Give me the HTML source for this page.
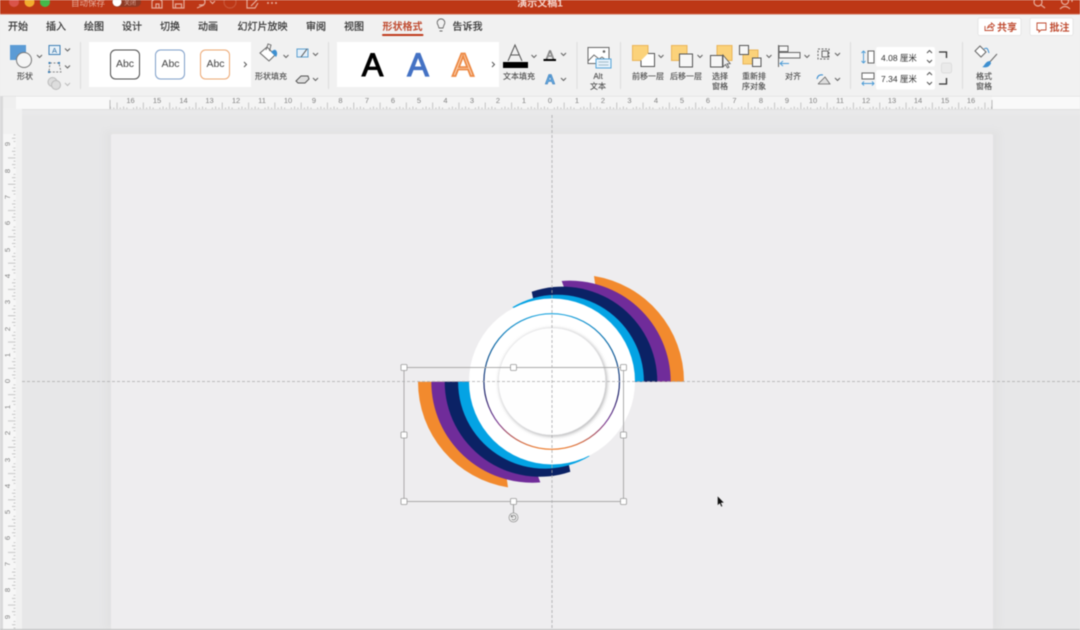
<!DOCTYPE html>
<html><head><meta charset="utf-8"><style>
html,body{margin:0;padding:0;width:1080px;height:630px;overflow:hidden;background:#e9e9ea}
svg{display:block;position:absolute;left:0;top:0;filter:blur(.4px)}
text{font-family:"Liberation Sans","Noto Sans CJK SC",sans-serif;fill:#3c3c3c}
.t{font-size:10px;text-anchor:middle;fill:#333;stroke:#333;stroke-width:.2}
.s{font-size:8px;text-anchor:middle;fill:#4a4a4a;stroke:#4a4a4a;stroke-width:.12}
.r{font-size:7.5px;text-anchor:middle;fill:#808080}
.c{fill:none;stroke:#666;stroke-width:1.1}
.i{fill:none;stroke:#666;stroke-width:1}
</style></head><body>
<svg width="1080" height="630" viewBox="0 0 1080 630" xmlns="http://www.w3.org/2000/svg">
<defs>
<linearGradient id="ring" x1="0" y1="0" x2="0" y2="1"><stop offset="0" stop-color="#1da5df"/><stop offset=".35" stop-color="#0f4f8c"/><stop offset=".6" stop-color="#23246b"/><stop offset=".8" stop-color="#7a3a94"/><stop offset="1" stop-color="#ef7d2c"/></linearGradient>
<filter id="b2" x="-20%" y="-20%" width="140%" height="140%"><feGaussianBlur stdDeviation="1.800"/></filter>
<filter id="b3"><feGaussianBlur stdDeviation="3.5"/></filter>
<pattern id="hr" width="26.3" height="12" patternUnits="userSpaceOnUse" x="25" y="97">
<path d="M13.15 12V5.500M6.6 12V9.500M19.7 12V9.500M3.300 12V10.500M9.900 12V10.500M16.400 12V10.500M23 12V10.500" stroke="#b0b0b0" stroke-width=".7" fill="none"/></pattern>
<pattern id="vr" width="16" height="26.3" patternUnits="userSpaceOnUse" x="0" y="13.300">
<path d="M8 13.150H15.500M12 6.6H15.500M12 19.700H15.500M13.500 3.300H15.500M13.500 9.900H15.500M13.500 16.400H15.500M13.500 23H15.500" stroke="#b4b4b4" stroke-width=".7" fill="none"/></pattern>
</defs>

<!-- workspace -->
<rect x="0" y="96" width="1080" height="534" fill="#e9e9ea"/>
<rect x="22" y="115" width="1058" height="515" fill="#e7e7e8"/>
<rect x="104" y="130" width="896" height="500" fill="#e2e2e3" filter="url(#b3)"/>
<rect x="111" y="134" width="882" height="496" rx="2" fill="#eeedef"/>

<!-- rulers -->
<rect x="0" y="96" width="1080" height="13" fill="#f9f9f9"/>
<rect x="0" y="96" width="16" height="13" fill="#efefef"/>
<rect x="110" y="96" width="882" height="13" fill="#f4f4f4"/>
<rect x="110" y="97" width="882" height="12" fill="url(#hr)"/>
<path d="M0 96H1080" stroke="#dadada"/><path d="M0 109.500H1080" stroke="#e0e0e0"/>
<path d="M110 100V109M992 100V109" stroke="#aaa" stroke-width=".8"/>
<g>
<text class="r" x="130.500" y="103">16</text><text class="r" x="157" y="103">15</text><text class="r" x="183.500" y="103">14</text><text class="r" x="209.500" y="103">13</text><text class="r" x="236" y="103">12</text><text class="r" x="262" y="103">11</text><text class="r" x="288" y="103">10</text><text class="r" x="314" y="103">9</text><text class="r" x="340.500" y="103">8</text><text class="r" x="367" y="103">7</text><text class="r" x="393" y="103">6</text><text class="r" x="419" y="103">5</text><text class="r" x="445.500" y="103">4</text><text class="r" x="472" y="103">3</text><text class="r" x="498" y="103">2</text><text class="r" x="524" y="103">1</text><text class="r" x="550" y="103">0</text><text class="r" x="577" y="103">1</text><text class="r" x="603" y="103">2</text><text class="r" x="629.500" y="103">3</text><text class="r" x="656" y="103">4</text><text class="r" x="682" y="103">5</text><text class="r" x="708" y="103">6</text><text class="r" x="734.500" y="103">7</text><text class="r" x="761" y="103">8</text><text class="r" x="787" y="103">9</text><text class="r" x="813" y="103">10</text><text class="r" x="840" y="103">11</text><text class="r" x="866" y="103">12</text><text class="r" x="892" y="103">13</text><text class="r" x="918" y="103">14</text><text class="r" x="945" y="103">15</text><text class="r" x="971" y="103">16</text>
</g>
<rect x="3" y="109" width="19" height="521" fill="#f1f1f1"/>
<rect x="0" y="96" width="3" height="534" fill="#d9d9da"/>
<rect x="3" y="134" width="13" height="496" fill="#f6f6f6"/>
<rect x="3" y="134" width="13" height="496" fill="url(#vr)"/>
<g>
<text class="r" transform="translate(10,144) rotate(-90)">9</text><text class="r" transform="translate(10,171) rotate(-90)">8</text><text class="r" transform="translate(10,197) rotate(-90)">7</text><text class="r" transform="translate(10,223) rotate(-90)">6</text><text class="r" transform="translate(10,250) rotate(-90)">5</text><text class="r" transform="translate(10,276) rotate(-90)">4</text><text class="r" transform="translate(10,302) rotate(-90)">3</text><text class="r" transform="translate(10,329) rotate(-90)">2</text><text class="r" transform="translate(10,355) rotate(-90)">1</text><text class="r" transform="translate(10,381) rotate(-90)">0</text><text class="r" transform="translate(10,407) rotate(-90)">1</text><text class="r" transform="translate(10,433) rotate(-90)">2</text><text class="r" transform="translate(10,460) rotate(-90)">3</text><text class="r" transform="translate(10,486) rotate(-90)">4</text><text class="r" transform="translate(10,512) rotate(-90)">5</text><text class="r" transform="translate(10,538) rotate(-90)">6</text><text class="r" transform="translate(10,564) rotate(-90)">7</text><text class="r" transform="translate(10,590) rotate(-90)">8</text><text class="r" transform="translate(10,617) rotate(-90)">9</text>
</g>

<!-- graphic -->
<g>
<path d="M684 381.700A107 107 0 0 0 594 276L596 290L552 381.700Z" fill="#f28a2e"/>
<path d="M670.700 381.700A101 101 0 0 0 561.700 281L565 290L552 381.700Z" fill="#702c9a"/>
<path d="M657.300 381.700A95 95 0 0 0 531.700 291.700L533 298L552 381.700Z" fill="#0b2265"/>
<path d="M643.900 381.700A86.700 86.700 0 0 0 512.300 307.300L516 309L552 381.700Z" fill="#04a3e4"/>
<g transform="rotate(180 551 381.700)">
<path d="M684 381.700A107 107 0 0 0 594 276L596 290L552 381.700Z" fill="#f28a2e"/>
<path d="M670.700 381.700A101 101 0 0 0 561.700 281L565 290L552 381.700Z" fill="#702c9a"/>
<path d="M657.300 381.700A95 95 0 0 0 531.700 291.700L533 298L552 381.700Z" fill="#0b2265"/>
<path d="M643.900 381.700A86.700 86.700 0 0 0 512.300 307.300L516 309L552 381.700Z" fill="#04a3e4"/>
</g>
<circle cx="552" cy="381.500" r="83" fill="#fff"/>
<circle cx="551.700" cy="381.500" r="67.800" fill="none" stroke="url(#ring)" stroke-width="1.200"/>
<circle cx="553" cy="382.500" r="54" fill="#b2b2b4" filter="url(#b2)"/>
<circle cx="552" cy="381.500" r="53.500" fill="#fefefe" stroke="#e8e8ea" stroke-width=".6"/>
</g>

<!-- guides -->
<path d="M22 381.500H1080" stroke="#a9a9ab" stroke-width=".8" stroke-dasharray="3 2" fill="none"/>
<path d="M552 115V630" stroke="#a9a9ab" stroke-width=".8" stroke-dasharray="3 2" fill="none"/>

<!-- selection -->
<rect x="404" y="367.500" width="219.500" height="134" fill="none" stroke="#ababab" stroke-width="1"/>
<path d="M513.500 502V513" stroke="#999" fill="none"/>
<g fill="#fff" stroke="#999" stroke-width=".8">
<rect x="401" y="364.500" width="6" height="6" rx="1"/><rect x="510.500" y="364.500" width="6" height="6" rx="1"/><rect x="620.500" y="364.500" width="6" height="6" rx="1"/>
<rect x="401" y="432" width="6" height="6" rx="1"/><rect x="620.500" y="432" width="6" height="6" rx="1"/>
<rect x="401" y="498.500" width="6" height="6" rx="1"/><rect x="510.500" y="498.500" width="6" height="6" rx="1"/><rect x="620.500" y="498.500" width="6" height="6" rx="1"/>
<circle cx="513.500" cy="517.500" r="4.500" fill="#eee"/>
</g>
<path d="M511.500 516.500a2.300 2.300 0 1 1 .3 2.600M511.300 515v2h2" fill="none" stroke="#777" stroke-width=".7"/>

<!-- cursor -->
<path d="M717.500 496v9.500l2.200-2 1.500 3.300 1.400-.6-1.500-3.200 3-.2Z" fill="#111" stroke="#eee" stroke-width=".4"/>

<!-- bottom -->
<path d="M0 629.500H1080" stroke="#bdbdbd"/>

<!-- ribbon -->
<rect x="0" y="15" width="1080" height="81" fill="#f1f1f1"/>
<rect x="0" y="0" width="1080" height="14" fill="#bd3716"/>
<rect x="0" y="13.500" width="1080" height="1" fill="#d26a50"/>

<circle cx="14" cy="2" r="5" fill="#d9544a"/><circle cx="29.500" cy="2" r="5" fill="#f2ac2e"/><circle cx="45" cy="2" r="5" fill="#44b94a"/>
<text x="88" y="6" font-size="8.500" text-anchor="middle" style="fill:#e6ab99">自动保存</text>
<rect x="112" y="-3" width="29" height="10" rx="5" fill="#8d3a24"/><circle cx="117" cy="2" r="4.500" fill="#fff"/>
<text x="130" y="5" font-size="6" text-anchor="middle" style="fill:#d8a596">关闭</text>
<g fill="none" stroke="#e6ab99" stroke-width="1.200">
<path d="M152 8V1l5-4 5 4v7ZM156 8V4h3v4"/>
<path d="M173 -2h9l2 2v8h-11ZM175.500 8V4h6v4"/>
<path d="M195 -1h7q3 0 3 3t-3 3h-3M197 8l7-3"/>
<path d="M210 1l2.500 2.500L215 1"/>
<circle cx="230" cy="2" r="6" stroke="#c9583a"/>
<path d="M247 -2h8v2M247 -2v10h8l3-5M251 6l6-6"/>
</g>
<g fill="#e6ab99"><circle cx="268" cy="3" r="1"/><circle cx="272" cy="3" r="1"/><circle cx="276" cy="3" r="1"/></g>
<text x="540" y="6.500" font-size="10" font-weight="bold" text-anchor="middle" style="fill:#f5d4ca">演示文稿1</text>
<g fill="none" stroke="#e6ab99" stroke-width="1.200"><circle cx="1038" cy="2" r="4"/><path d="M1041 5l4 3"/><circle cx="1065" cy="1" r="3.500"/><path d="M1060 9q5-5 10 0M1068 -1h4v3"/></g>

<!-- tabs -->
<text class="t" x="18" y="30">开始</text><text class="t" x="56" y="30">插入</text><text class="t" x="94" y="30">绘图</text><text class="t" x="132" y="30">设计</text><text class="t" x="170" y="30">切换</text><text class="t" x="208" y="30">动画</text><text class="t" x="262.500" y="30">幻灯片放映</text><text class="t" x="316" y="30">审阅</text><text class="t" x="354" y="30">视图</text>
<text x="402.500" y="30" font-size="10" font-weight="bold" text-anchor="middle" style="fill:#bf4a2f">形状格式</text>
<rect x="382" y="34" width="41.500" height="2" rx="1" fill="#bf3a1c"/>
<path d="M438 25a3.800 3.800 0 1 1 6 0l-1 3h-4ZM439.500 31h3" fill="none" stroke="#666" stroke-width=".9"/>
<text class="t" x="467.500" y="30">告诉我</text>

<!-- share -->
<rect x="978" y="18" width="43" height="17.500" rx="2" fill="#fff" stroke="#e2e2e2" stroke-width=".8"/>
<rect x="1030" y="18" width="43" height="17.500" rx="2" fill="#fff" stroke="#e2e2e2" stroke-width=".8"/>
<path d="M985 26v4.500h8V28M987.500 28q1-3.500 4-3.500v-1.500l3 2.500-3 2.500v-1.500q-2 0-4 1.500Z" fill="none" stroke="#bf4a2f" stroke-width=".9"/>
<text x="1007" y="31" font-size="10" font-weight="bold" text-anchor="middle" style="fill:#bf4a2f">共享</text>
<path d="M1037 23h9v7h-5l-2 2v-2h-2Z" fill="none" stroke="#bf4a2f" stroke-width=".9"/>
<text x="1059.500" y="31" font-size="10" font-weight="bold" text-anchor="middle" style="fill:#bf4a2f">批注</text>

<!-- dividers -->
<path d="M80.500 42V89M328.500 42V89M577 42V89M620.500 42V89M850.500 42V89M962.500 42V89" stroke="#dcdcdc" fill="none"/>

<!-- shape group -->
<rect x="10" y="45" width="16" height="15" fill="#5b9bd5"/>
<circle cx="24" cy="60" r="7.500" fill="#f5f5f5" stroke="#777" stroke-width="1"/>
<text class="s" x="25" y="79">形状</text>
<g class="c">
<path d="M37 55l2.500 2.500L42 55M65 48.500l2.500 2.500 2.500-2.500M65 65.500l2.500 2.500 2.500-2.500"/>
</g>
<path d="M65 83l2.500 2.500 2.500-2.500" fill="none" stroke="#bbb"/>
<rect x="49" y="45.500" width="11" height="9" fill="#e8f1f8" stroke="#3d7fb5"/>
<text x="54.500" y="53" font-size="7.500" text-anchor="middle" style="fill:#2f6fa5">A</text>
<path d="M50 63h9l2 9h-12Z" fill="none" stroke="#666" stroke-width=".8" stroke-dasharray="2 1.500"/>
<g fill="#3d7fb5"><rect x="48.500" y="62" width="2" height="2"/><rect x="58" y="62" width="2" height="2"/><rect x="48" y="71" width="2" height="2"/></g>
<circle cx="52.500" cy="82" r="4.500" fill="#ddd" stroke="#bbb"/><circle cx="56" cy="85" r="4.500" fill="#ddd" stroke="#bbb"/>

<!-- gallery 1 -->
<rect x="89" y="42" width="162" height="45" fill="#fff"/>
<rect x="110.500" y="50" width="29" height="29" rx="5" fill="#fff" stroke="#4d4d4d" stroke-width="1"/>
<rect x="155.500" y="50" width="29" height="29" rx="5" fill="#fff" stroke="#7f9fc9" stroke-width="1"/>
<rect x="200.500" y="50" width="29" height="29" rx="5" fill="#fff" stroke="#eda873" stroke-width="1"/>
<text x="125" y="67" font-size="10.500" text-anchor="middle" style="fill:#444">Abc</text>
<text x="170.500" y="67" font-size="10.500" text-anchor="middle" style="fill:#444">Abc</text>
<text x="215.500" y="67" font-size="10.500" text-anchor="middle" style="fill:#444">Abc</text>
<path d="M244 62l2.500 2.500L244 67" fill="none" stroke="#555" stroke-width="1"/>

<!-- fill icons -->
<path d="M260 53l7-6 8 8-6 6Z" fill="#fff" stroke="#666" stroke-width="1"/>
<path d="M266 50l2-6 3 1-1.500 6" fill="none" stroke="#666" stroke-width=".9"/>
<path d="M271 52q4-4 5.500-1t-.5 6l-2-2Z" fill="#3d8fd0"/>
<path d="M283.500 55l2.500 2.500 2.500-2.500M313 53l2.500 2.500 2.500-2.500M313 78l2.500 2.500 2.500-2.500" class="c"/>
<text class="s" x="271" y="79">形状填充</text>
<rect x="297" y="49" width="11" height="8" fill="#e4f0fa" stroke="#5d9fcf"/><path d="M301 57l6-8" stroke="#555" fill="none"/>
<path d="M296 81l5-5h7l1 3-4 4h-7Z" fill="#ddd" stroke="#555"/>

<!-- gallery 2 -->
<rect x="337" y="42" width="162" height="45" fill="#fff"/>
<text x="372.500" y="76" font-size="32" text-anchor="middle" style="fill:#000;stroke:#000;stroke-width:1.100">A</text>
<text x="418" y="76" font-size="32" text-anchor="middle" style="fill:#4472c4;stroke:#4472c4;stroke-width:1.300">A</text>
<text x="463" y="76" font-size="32" text-anchor="middle" style="fill:#fbd7bb;stroke:#ed8a45;stroke-width:1.800">A</text>
<path d="M492 62l2.500 2.500L492 67" fill="none" stroke="#555" stroke-width="1"/>

<!-- text fill -->
<path d="M508 61l7-16 7 16M511 55h8" fill="none" stroke="#555" stroke-width="1"/>
<rect x="503" y="62" width="25" height="6" fill="#000"/>
<path d="M531.500 55l2.500 2.500 2.500-2.500M561 53l2.500 2.500 2.500-2.500M561 78l2.500 2.500 2.500-2.500" class="c"/>
<text class="s" x="519" y="79">文本填充</text>
<text x="550" y="59" font-size="12" text-anchor="middle" style="fill:#ccc;stroke:#666;stroke-width:.6">A</text>
<rect x="543.500" y="59" width="12.500" height="2" fill="#000"/>
<text x="550" y="84" font-size="14" font-weight="bold" text-anchor="middle" style="fill:#6db0e4;stroke:#2e74b5;stroke-width:.6">A</text>

<!-- alt -->
<rect x="588" y="47.500" width="21" height="16" fill="#fff" stroke="#666"/>
<path d="M588 61l6-6 5 4 3-2 7 5" fill="none" stroke="#666" stroke-width=".9"/><circle cx="604" cy="51.500" r="1.300" fill="#666"/>
<rect x="596" y="59" width="15" height="9" fill="#e6f2fb" stroke="#56a5d8"/>
<path d="M598.500 62h10M598.500 65h10" stroke="#8ab" stroke-width=".7"/>
<text class="s" x="598" y="79">Alt</text><text class="s" x="598" y="89">文本</text>

<!-- arrange -->
<rect x="632.500" y="45.500" width="15.500" height="15" fill="#fbd27a" stroke="#eab55a"/>
<path d="M648 53.500h6.500V66.500H641V60.500" fill="#fff" stroke="#555"/>
<path d="M658.500 55l2.500 2.500 2.500-2.500M697.500 55l2.500 2.500 2.500-2.500M766.500 55l2.500 2.500 2.500-2.500M804.500 55l2.500 2.500 2.500-2.500M835 53l2.500 2.500 2.500-2.500M835 78l2.500 2.500 2.500-2.500" class="c"/>
<text class="s" x="648" y="79">前移一层</text>
<rect x="671.500" y="45.500" width="15.500" height="15" fill="#fbd27a" stroke="#eab55a"/>
<rect x="679.500" y="54" width="13" height="13" fill="#f6f6f6" stroke="#555"/>
<text class="s" x="686" y="79">后移一层</text>
<rect x="717" y="45.500" width="15" height="15" fill="#fbd27a" stroke="#eab55a"/>
<rect x="710.500" y="55.500" width="12" height="11.500" fill="#f6f6f6" stroke="#555"/>
<path d="M723 55v12l2.500-2.500 2 3.500 1.500-.8-2-3.400 3.200-.2Z" fill="#eee" stroke="#555" stroke-width=".8"/>
<text class="s" x="720" y="79">选择</text><text class="s" x="720" y="89">窗格</text>
<rect x="743" y="50" width="15" height="14" fill="#fbd27a" stroke="#eab55a"/>
<rect x="739.500" y="45.500" width="9" height="9" fill="#f6f6f6" stroke="#555"/>
<rect x="752.500" y="58" width="8.500" height="8.500" fill="#f6f6f6" stroke="#555"/>
<text class="s" x="754" y="79">重新排</text><text class="s" x="754" y="89">序对象</text>
<path d="M778.500 45V67" stroke="#666" fill="none"/>
<rect x="779" y="46" width="9" height="5.500" fill="#f6f6f6" stroke="#666"/>
<rect x="779" y="52.500" width="21" height="5.500" fill="#f6f6f6" stroke="#666"/>
<path d="M789 63.500h-9m3-2.500l-3 2.500 3 2.500" fill="none" stroke="#4a9ad5" stroke-width=".9"/>
<text class="s" x="793" y="79">对齐</text>
<rect x="818" y="49" width="11" height="10" fill="none" stroke="#666" stroke-dasharray="2 1.500"/>
<rect x="822" y="51" width="6" height="6" fill="none" stroke="#666"/>
<path d="M818 84h12l-5-7-7 7" fill="#ddd" stroke="#666" stroke-width=".8"/>
<path d="M817 79q1-5 6-4" fill="none" stroke="#3d8fd0" stroke-width="1.100"/>

<!-- size -->
<rect x="868" y="51" width="6" height="12" fill="#fff" stroke="#666"/>
<path d="M863.500 51V63M861.500 53l2-2 2 2M861.500 61l2 2 2-2" fill="none" stroke="#4a9ad5" stroke-width=".9"/>
<rect x="862" y="73" width="12" height="6" fill="#fff" stroke="#666"/>
<path d="M862 83.500h12M864 81.500l-2 2 2 2M872 81.500l2 2-2 2" fill="none" stroke="#4a9ad5" stroke-width=".9"/>
<rect x="876" y="47" width="59" height="19.500" rx="2" fill="#fff"/>
<rect x="876" y="70" width="59" height="19.500" rx="2" fill="#fff"/>
<text x="881" y="61" font-size="8.500" style="fill:#333">4.08 厘米</text>
<text x="881" y="82" font-size="8.500" style="fill:#333">7.34 厘米</text>
<path d="M927 53l2.500-2.500 2.500 2.500M927 60l2.500 2.500 2.500-2.500M927 75l2.500-2.500 2.500 2.500M927 82l2.500 2.500 2.500-2.500" fill="none" stroke="#555"/>
<path d="M939 52h7.500v6M939 84h7.500v-6" fill="none" stroke="#333" stroke-width="1.300"/>
<rect x="941.500" y="63" width="10" height="10" rx="2" fill="#eaeaea" stroke="#ddd"/>

<!-- format pane -->
<path d="M975 51l5-5 6 6-5 5Z" fill="#fff" stroke="#666"/>
<path d="M984 49q3-2 4 1l1 3" fill="none" stroke="#3d8fd0" stroke-width="1"/>
<path d="M997 54l-9 10" stroke="#666" fill="none"/>
<path d="M990 61q-3 0-5 3t-3 3q5 1 7-1t2-3Z" fill="#3d8fd0"/>
<text class="s" x="984" y="79">格式</text><text class="s" x="984" y="89">窗格</text>
</svg>
</body></html>
